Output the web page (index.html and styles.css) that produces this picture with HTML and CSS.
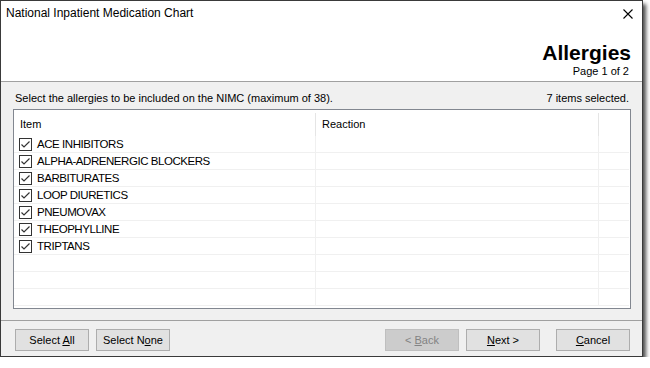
FILE: index.html
```
<!DOCTYPE html>
<html lang="en">
<head>
    <meta charset="UTF-8">
    <title>National Inpatient Medication Chart</title>
    <link rel="stylesheet" href="styles.css">
</head>
<body>

<div class="window">
    <!-- Header: title bar and page heading -->
    <div class="header">
        <div class="titlebar">
            <span class="title">National Inpatient Medication Chart</span>
            <svg class="close" width="10" height="10" viewBox="0 0 10 10">
                <path d="M0.5 0.5 L9.5 9.5 M9.5 0.5 L0.5 9.5" stroke="#000" stroke-width="1.1"/>
            </svg>
        </div>
        <div class="page-head">
            <h1>Allergies</h1>
            <div class="page-no">Page 1 of 2</div>
        </div>
    </div>

    <div class="content">
        <div class="info">
            <span>Select the allergies to be included on the NIMC (maximum of 38).</span>
            <span>7 items selected.</span>
        </div>

        <div class="list">
            <div class="list-head">
                <div class="cell">Item</div>
                <div class="cell">Reaction</div>
                <div class="cell"></div>
            </div>
            <div class="row"><div class="cell"><span class="check"></span>ACE INHIBITORS</div><div class="cell"></div><div class="cell"></div></div>
            <div class="row"><div class="cell"><span class="check"></span>ALPHA-ADRENERGIC BLOCKERS</div><div class="cell"></div><div class="cell"></div></div>
            <div class="row"><div class="cell"><span class="check"></span>BARBITURATES</div><div class="cell"></div><div class="cell"></div></div>
            <div class="row"><div class="cell"><span class="check"></span>LOOP DIURETICS</div><div class="cell"></div><div class="cell"></div></div>
            <div class="row"><div class="cell"><span class="check"></span>PNEUMOVAX</div><div class="cell"></div><div class="cell"></div></div>
            <div class="row"><div class="cell"><span class="check"></span>THEOPHYLLINE</div><div class="cell"></div><div class="cell"></div></div>
            <div class="row"><div class="cell"><span class="check"></span>TRIPTANS</div><div class="cell"></div><div class="cell"></div></div>
            <div class="row"><div class="cell"></div><div class="cell"></div><div class="cell"></div></div>
            <div class="row"><div class="cell"></div><div class="cell"></div><div class="cell"></div></div>
            <div class="row"><div class="cell"></div><div class="cell"></div><div class="cell"></div></div>
        </div>
    </div>

    <div class="footer">
        <button class="btn">Select <u>A</u>ll</button>
        <button class="btn">Select N<u>o</u>ne</button>
        <span class="spacer"></span>
        <button class="btn" disabled>&lt; <u>B</u>ack</button>
        <button class="btn"><u>N</u>ext &gt;</button>
        <button class="btn btn-cancel"><u>C</u>ancel</button>
    </div>
</div>

</body>
</html>
```

FILE: styles.css
```
body {
    margin: 0;
    font-family: 'Liberation Sans', Arial, sans-serif;
    font-size: 11px;
    color: #000;
    background: #fff;
}
.window {
    width: 643px;
    height: 357px;
    box-sizing: border-box;
    border: 1px solid #3a3a3a;
    background: #f0f0f0;
    display: flex;
    flex-direction: column;
    box-shadow: 3px 4px 4px rgba(0, 0, 0, 0.7);
}
.header {
    background: #fff;
    height: 81px;
    box-sizing: border-box;
    border-bottom: 1px solid #a0a0a0;
}
.titlebar {
    display: flex;
    justify-content: space-between;
    align-items: center;
    height: 23px;
    padding: 0 9px 0 5px;
}
.title {
    font-size: 12px;
}
.close {
    display: block;
    margin-top: 2px;
}
.page-head {
    text-align: right;
    padding: 17px 11px 0 0;
}
h1 {
    margin: 0;
    font-size: 21px;
    line-height: 24px;
    font-weight: bold;
}
.page-no {
    line-height: 13px;
    padding-right: 2px;
}
.content {
    padding: 0 11px 0 12px;
}
.info {
    display: flex;
    justify-content: space-between;
    line-height: 16px;
    padding: 8px 2px 3px 2px;
}
.list {
    height: 200px;
    box-sizing: border-box;
    border: 1px solid #828790;
    background: #fff;
}
.list-head, .row {
    display: grid;
    grid-template-columns: 302px 283px 1fr;
}
.list-head {
    height: 26px;
}
.list-head .cell {
    padding: 4px 0 0 6px;
    line-height: 14px;
    border-right: 1px solid #e5e5e5;
    margin-top: 3px;
    height: 23px;
    box-sizing: border-box;
}
.list-head .cell:last-child {
    border-right: none;
}
.row {
    height: 17px;
    box-sizing: border-box;
    border-bottom: 1px solid #f0f0f0;
    margin-right: 1px;
}
.row .cell {
    display: flex;
    align-items: center;
    border-right: 1px solid #f0f0f0;
    font-size: 11.5px;
    letter-spacing: -0.45px;
}
.row .cell:last-child {
    border-right: none;
}
.check {
    width: 13px;
    height: 13px;
    box-sizing: border-box;
    border: 1px solid #333;
    margin: 0 5px 0 5px;
    background: url("data:image/svg+xml;utf8,<svg xmlns='http://www.w3.org/2000/svg' width='11' height='11'><path d='M1.5 5.5 L4 8 L9.5 2.5' fill='none' stroke='%23333' stroke-width='1.2'/></svg>") no-repeat center;
}
.footer {
    margin-top: 11px;
    border-top: 1px solid #a0a0a0;
    display: flex;
    padding: 8px 12px 0 14px;
    gap: 7px;
}
.spacer {
    flex: 1;
}
.btn {
    width: 74px;
    height: 22px;
    margin: 0;
    padding: 0;
    font-family: 'Liberation Sans', Arial, sans-serif;
    font-size: 11px;
    color: #000;
    background: #e1e1e1;
    border: 1px solid #adadad;
    border-radius: 0;
}
.btn:disabled {
    background: #cccccc;
    border-color: #bfbfbf;
    color: #838383;
}
.btn-cancel {
    margin-left: 9px;
}
```
